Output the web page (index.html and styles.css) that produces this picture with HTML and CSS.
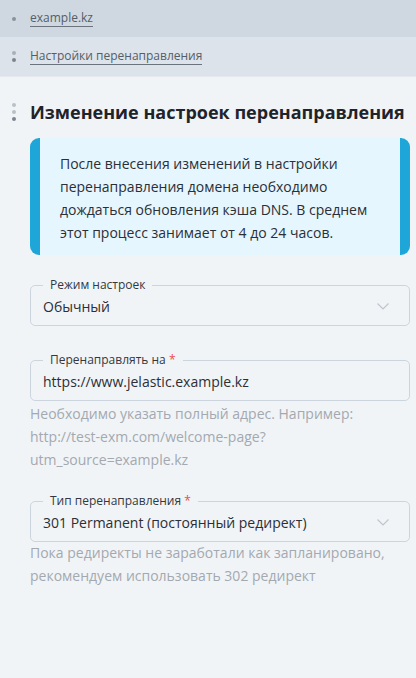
FILE: index.html
```html
<!DOCTYPE html>
<html lang="ru">
  <head>
    <meta charset="UTF-8" />
    <meta name="viewport" content="width=device-width, initial-scale=1.0" />
    <title>Настройки перенаправления</title>
    <link rel="stylesheet" href="styles.css">
  </head>
  <body>
    <div class="crumb crumb-1">
      <span class="dots"><i></i></span>
      <a href="#">example.kz</a>
    </div>
    <div class="crumb crumb-2">
      <span class="dots"><i></i><i></i></span>
      <a href="#">Настройки перенаправления</a>
    </div>

    <div class="main">
      <div class="title">
        <span class="dots"><i></i><i></i><i></i></span>
        <h1>Изменение настроек перенаправления</h1>
      </div>

      <div class="info">
        После внесения изменений в настройки перенаправления домена необходимо дождаться обновления кэша DNS. В среднем этот процесс занимает от 4 до 24 часов.
      </div>

      <fieldset class="field field-mode">
        <legend>Режим настроек</legend>
        <div class="value">Обычный</div>
        <svg class="chevron" width="12" height="7" viewBox="0 0 12 7"><path d="M0.5 0.5l5.5 5.5 5.5-5.5" fill="none" stroke="#bfc6cd" stroke-width="1.2"/></svg>
      </fieldset>

      <fieldset class="field field-url">
        <legend>Перенаправлять на <b>*</b></legend>
        <div class="value">https://www.jelastic.example.kz</div>
      </fieldset>
      <p class="hint hint-url">Необходимо указать полный адрес. Например: http://test-exm.com/welcome-page?utm_source=example.kz</p>

      <fieldset class="field field-type">
        <legend>Тип перенаправления <b>*</b></legend>
        <div class="value">301 Permanent (постоянный редирект)</div>
        <svg class="chevron" width="12" height="7" viewBox="0 0 12 7"><path d="M0.5 0.5l5.5 5.5 5.5-5.5" fill="none" stroke="#bfc6cd" stroke-width="1.2"/></svg>
      </fieldset>
      <p class="hint hint-type">Пока редиректы не заработали как запланировано, рекомендуем использовать 302 редирект</p>
    </div>
  </body>
</html>
```
FILE: styles.css
```css
* {
  box-sizing: border-box;
}
body {
  margin: 0;
  min-height: 678px;
  background-color: #f1f4f7;
  font-family: "Open Sans", "Liberation Sans", sans-serif;
  color: #2b2f36;
}
.crumb {
  display: flex;
  align-items: center;
  padding-left: 30px;
  position: relative;
  font-size: 12px;
}
.crumb a {
  color: #555d68;
  text-decoration: none;
  border-bottom: 1px solid #6b737d;
  line-height: 16px;
}
.crumb-1 {
  height: 37px;
  background-color: #cfd8e1;
}
.crumb-2 {
  height: 40px;
  background-color: #dde3ea;
  border-bottom: 1px solid #e6eaef;
}
.dots {
  position: absolute;
  left: 12px;
  display: flex;
  flex-direction: column;
  gap: 3px;
}
.dots i {
  display: block;
  width: 4px;
  height: 4px;
  border-radius: 50%;
  background-color: #7c858f;
}
.crumb-1 .dots i {
  background-color: #8a939c;
}
.crumb-2 .dots i:first-child {
  background-color: #a8b0b8;
}
.title .dots i:nth-child(1),
.title .dots i:nth-child(2) {
  background-color: #b9c0c7;
}
.title .dots i:nth-child(3) {
  background-color: #7c858f;
}

.main {
  padding: 0 6px 0 30px;
}
.title {
  display: flex;
  align-items: center;
  position: relative;
  padding: 24px 0 0;
  margin-bottom: 15px;
}
.title .dots {
  left: -18px;
  top: 26px;
}
.title h1 {
  margin: 0;
  font-size: 18px;
  line-height: 22px;
  font-weight: 700;
  color: #1f232a;
  white-space: nowrap;
}
.info {
  width: 380px;
  background-color: #e6f6fe;
  border-left: 10px solid #1fa6d9;
  border-right: 10px solid #1fa6d9;
  border-radius: 9px;
  padding: 14px 10px 11px 20px;
  font-size: 14px;
  line-height: 23px;
  color: #2b2f36;
}

.field {
  position: relative;
  width: 380px;
  margin: 0;
  padding: 0 12px;
  border: 1px solid #ccd5de;
  border-radius: 5px;
  height: 48px;
}
.field legend {
  margin-left: 0;
  padding: 0 7px;
  font-size: 12px;
  line-height: 14px;
  color: #333840;
}
.field legend b {
  color: #ef4a4a;
  font-weight: 400;
}
.value {
  font-size: 14px;
  line-height: 20px;
  padding-top: 5px;
  color: #2b2f36;
}
.chevron {
  position: absolute;
  right: 20px;
  top: 11px;
}
.field-mode {
  margin-top: 23px;
}
.field-url {
  margin-top: 27px;
}
.field-type {
  margin-top: 23px;
}
.hint {
  margin: 1px 0 0;
  font-size: 14px;
  line-height: 23px;
  color: #a3a9b0;
  width: 380px;
}
.hint-type {
  margin-top: -1px;
}
```
